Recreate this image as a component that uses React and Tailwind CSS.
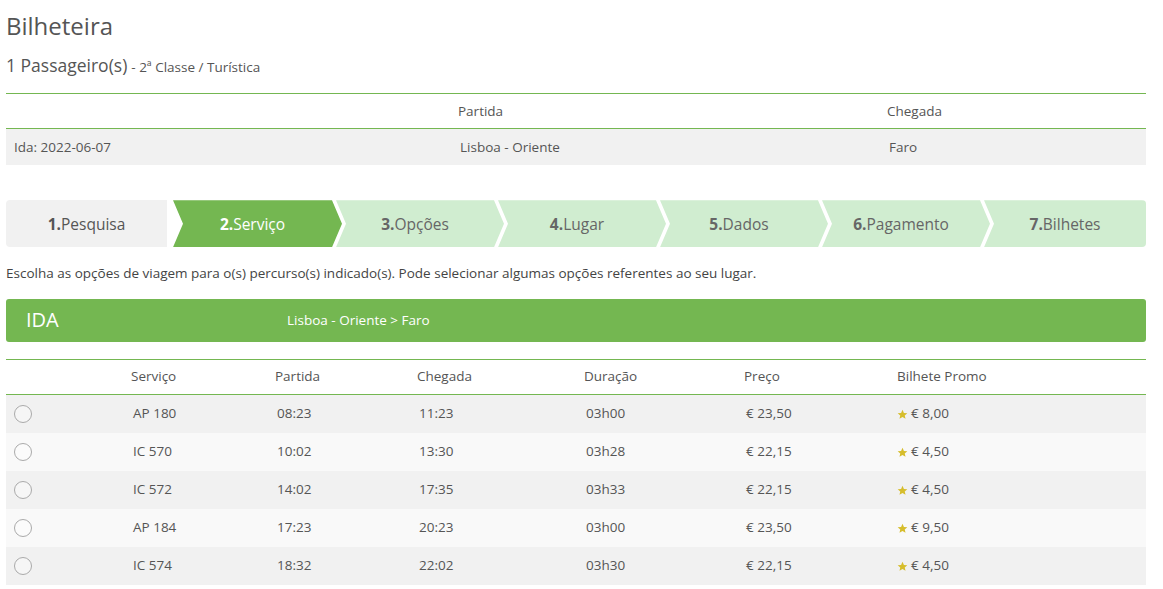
const steps = [
  { n: "1.", label: "Pesquisa", state: "done" },
  { n: "2.", label: "Serviço", state: "active" },
  { n: "3.", label: "Opções", state: "todo" },
  { n: "4.", label: "Lugar", state: "todo" },
  { n: "5.", label: "Dados", state: "todo" },
  { n: "6.", label: "Pagamento", state: "todo" },
  { n: "7.", label: "Bilhetes", state: "todo" },
];

const trips = [
  { svc: "AP 180", dep: "08:23", arr: "11:23", dur: "03h00", price: "€ 23,50", promo: "€ 8,00" },
  { svc: "IC 570", dep: "10:02", arr: "13:30", dur: "03h28", price: "€ 22,15", promo: "€ 4,50" },
  { svc: "IC 572", dep: "14:02", arr: "17:35", dur: "03h33", price: "€ 22,15", promo: "€ 4,50" },
  { svc: "AP 184", dep: "17:23", arr: "20:23", dur: "03h00", price: "€ 23,50", promo: "€ 9,50" },
  { svc: "IC 574", dep: "18:32", arr: "22:02", dur: "03h30", price: "€ 22,15", promo: "€ 4,50" },
];

// Chevron outline for each wizard step: notch on the left, point on the right.
function stepClip(i, last) {
  if (i === 0) return "none";
  const left = "10px 50%";
  if (last) return `polygon(0 0, 100% 0, 100% 100%, 0 100%, ${left})`;
  return `polygon(0 0, calc(100% - 10px) 0, 100% 50%, calc(100% - 10px) 100%, 0 100%, ${left})`;
}

function Steps() {
  return (
    <div className="flex h-[47px]">
      {steps.map((s, i) => {
        const last = i === steps.length - 1;
        const bg =
          s.state === "done"
            ? "bg-[#f1f1f1] text-[#555]"
            : s.state === "active"
            ? "bg-[#74b751] text-white"
            : "bg-[#d0edd0] text-[#666]";
        const size =
          i === 0
            ? "w-[161px] shrink-0 rounded-l-[4px]"
            : last
            ? "flex-1 -ml-[6px] rounded-r-[4px]"
            : i === 1
            ? "w-[169px] shrink-0 ml-[6px] pr-[10px]"
            : "w-[168px] shrink-0 -ml-[6px] pr-[10px]";
        return (
          <div
            key={s.n}
            className={`flex items-center justify-center text-[15.5px] pt-[1px] ${bg} ${size}`}
            style={{ clipPath: stepClip(i, last) }}
          >
            <span className="font-bold">{s.n}</span>
            <span>{s.label}</span>
          </div>
        );
      })}
    </div>
  );
}

function Star() {
  return (
    <svg width="11" height="11" viewBox="0 0 24 24" className="mr-[3px] mt-[2px]">
      <path
        d="M12 1.5l3.1 7 7.4.6-5.6 4.9 1.7 7.4L12 17.5l-6.6 3.9 1.7-7.4L1.5 9.1l7.4-.6z"
        fill="#d6bd2c"
      />
    </svg>
  );
}

const cols = "grid grid-cols-[117px_144px_142px_167px_160px_153px_1fr]";

export default function App() {
  return (
    <div
      className="w-[1163px] bg-white text-[#555] pl-[6px] pr-[17px]"
      style={{ fontFamily: "'Open Sans', 'Noto Sans', sans-serif" }}
    >
      <h1 className="text-[24px] leading-[28px] pt-[12px] text-[#555]">Bilheteira</h1>
      <div className="mt-[12px] flex items-baseline">
        <span className="text-[17.5px]">1 Passageiro(s)</span>
        <span className="text-[13.5px] ml-[4px]">- 2ª Classe / Turística</span>
      </div>

      <div className="mt-[15px] border-t border-[#74b751] text-[13.5px]">
        <div className="grid grid-cols-[444px_429px_1fr] h-[35px] items-center border-b border-[#74b751]">
          <div />
          <div className="pl-[8px]">Partida</div>
          <div className="pl-[8px]">Chegada</div>
        </div>
        <div className="grid grid-cols-[444px_429px_1fr] h-[36px] items-center bg-[#f1f1f1]">
          <div className="pl-[8px]">Ida: 2022-06-07</div>
          <div className="pl-[10px]">Lisboa - Oriente</div>
          <div className="pl-[10px]">Faro</div>
        </div>
      </div>

      <div className="mt-[35px]">
        <Steps />
      </div>

      <p className="mt-[16px] text-[13.5px] text-[#444]">
        Escolha as opções de viagem para o(s) percurso(s) indicado(s). Pode selecionar algumas opções referentes ao seu lugar.
      </p>

      <div className="mt-[15px] h-[43px] bg-[#74b751] rounded-[3px] flex items-center text-white">
        <span className="w-[281px] pl-[20px] text-[20px]">IDA</span>
        <span className="text-[13.5px] font-medium">Lisboa - Oriente &gt; Faro</span>
      </div>

      <div className="mt-[17px] border-t border-[#74b751] text-[13.5px]">
        <div className={`${cols} h-[35px] items-center border-b border-[#74b751]`}>
          <div />
          <div className="pl-[8px]">Serviço</div>
          <div className="pl-[8px]">Partida</div>
          <div className="pl-[8px]">Chegada</div>
          <div className="pl-[8px]">Duração</div>
          <div className="pl-[8px]">Preço</div>
          <div className="pl-[8px]">Bilhete Promo</div>
        </div>
        {trips.map((t, i) => (
          <div
            key={t.svc}
            className={`${cols} h-[38px] items-center ${i % 2 === 0 ? "bg-[#f1f1f1]" : "bg-[#f9f9f9]"}`}
          >
            <div className="pl-[8px]">
              <span className="block w-[18px] h-[18px] rounded-full border border-[#aaa] bg-white/40" />
            </div>
            <div className="pl-[10px]">{t.svc}</div>
            <div className="pl-[10px]">{t.dep}</div>
            <div className="pl-[10px]">{t.arr}</div>
            <div className="pl-[10px]">{t.dur}</div>
            <div className="pl-[10px]">{t.price}</div>
            <div className="pl-[8px] flex items-center">
              <Star />
              {t.promo}
            </div>
          </div>
        ))}
      </div>
    </div>
  );
}
